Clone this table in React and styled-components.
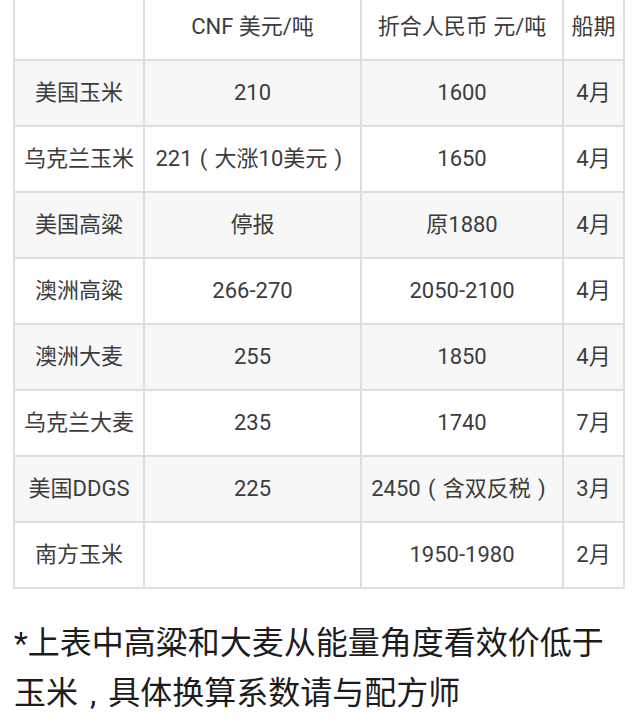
import React from "react";
import styled, { createGlobalStyle } from "styled-components";

const GlobalStyle = createGlobalStyle`
  html, body {
    margin: 0;
    padding: 0;
    background: #ffffff;
  }
  body {
    font-family: Roboto, "Noto Sans CJK SC", sans-serif;
  }
`;

const Page = styled.div`
  width: 640px;
  overflow: hidden;
`;

const TableWrap = styled.div`
  margin-top: -7px;
  padding-left: 13px;
`;

const Table = styled.table`
  border-collapse: collapse;
  table-layout: fixed;
  width: 612px;
  color: #3c3c3c;
  font-size: 22px;
  line-height: 30px;
`;

const Row = styled.tr`
  height: 66px;
  background: ${(p) => (p.$striped ? "#f7f7f7" : "#ffffff")};
`;

const Cell = styled.td`
  border: 2px solid #dedede;
  text-align: center;
  vertical-align: middle;
  padding: 0;
  white-space: nowrap;
`;

/* narrow mark padded out to a full-width slot, drawn in its middle */
const Punct = styled.span`
  padding: 0 ${(p) => p.$pad || "0.33em"};
`;

const Note = styled.p`
  margin: 29px 0 0;
  padding: 0 14px;
  font-size: 32px;
  line-height: 50px;
  color: #1c1c1c;
`;

const rows = [
  ["美国玉米", "210", "1600", "4月"],
  ["乌克兰玉米", <>221<Punct>(</Punct>大涨10美元<Punct>)</Punct></>, "1650", "4月"],
  ["美国高粱", "停报", "原1880", "4月"],
  ["澳洲高粱", "266-270", "2050-2100", "4月"],
  ["澳洲大麦", "255", "1850", "4月"],
  ["乌克兰大麦", "235", "1740", "7月"],
  ["美国DDGS", "225", <>2450<Punct>(</Punct>含双反税<Punct>)</Punct></>, "3月"],
  ["南方玉米", "", "1950-1980", "2月"],
];

export default function App() {
  return (
    <Page>
      <GlobalStyle />
      <TableWrap>
        <Table>
          <colgroup>
            <col style={{ width: 130 }} />
            <col style={{ width: 217 }} />
            <col style={{ width: 202 }} />
            <col style={{ width: 61 }} />
          </colgroup>
          <tbody>
            <Row>
              <Cell></Cell>
              <Cell>CNF 美元/吨</Cell>
              <Cell>折合人民币 元/吨</Cell>
              <Cell>船期</Cell>
            </Row>
            {rows.map((r, i) => (
              <Row key={r[0]} $striped={i % 2 === 0}>
                {r.map((c, j) => (
                  <Cell key={j}>{c}</Cell>
                ))}
              </Row>
            ))}
          </tbody>
        </Table>
      </TableWrap>
      <Note>
        *上表中高粱和大麦从能量角度看效价低于玉米<Punct $pad="0.375em">,</Punct>具体换算系数请与配方师
      </Note>
    </Page>
  );
}
